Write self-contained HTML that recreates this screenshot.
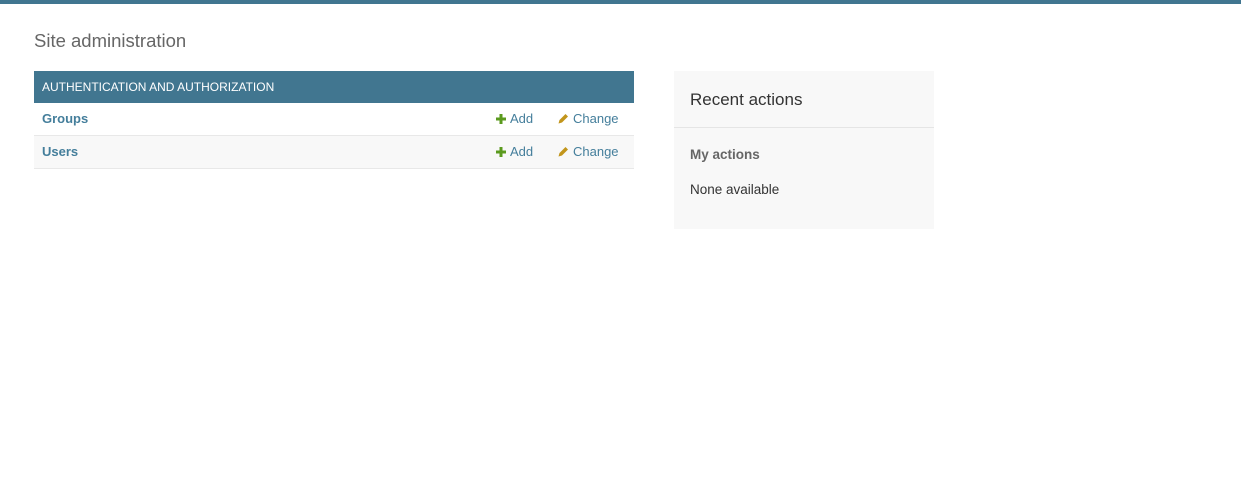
<!DOCTYPE html>
<html><head><meta charset="utf-8"><style>
*{box-sizing:border-box;margin:0;padding:0}
body{width:1241px;height:479px;background:#fff;font-family:"Liberation Sans","DejaVu Sans",sans-serif;font-size:13px;color:#333;position:relative;overflow:hidden}
.top{position:absolute;left:0;top:0;width:1241px;height:4px;background:#417690}
h1{position:absolute;left:34px;top:30px;font-weight:300;font-size:18.5px;color:#666}
.mod{position:absolute;left:34px;top:71px;width:600px}
.cap{background:#417690;color:#fff;height:32px;line-height:32px;padding-left:8px;font-size:12px}
.row{height:33px;border-bottom:1px solid #e8e8e8;position:relative;line-height:32px}
.row.alt{background:#f8f8f8}
.row b{position:absolute;left:8px;color:#447e9b;font-size:13px}
.add{position:absolute;left:462px;color:#447e9b}
.chg{position:absolute;left:524px;color:#447e9b}
.add svg,.chg svg{vertical-align:-1px;margin-right:4px}
.rec{position:absolute;left:674px;top:71px;width:260px;height:158px;background:#f8f8f8}
.rec h2{font-weight:400;font-size:17px;color:#333;padding:19px 16px 0;height:57px;border-bottom:1px solid #e5e5e5}
.rec h3{font-size:13.5px;color:#666;position:absolute;left:16px;top:76px}
.rec p{position:absolute;left:16px;top:111px;font-size:13.5px}
</style></head><body>
<div class="top"></div>
<h1>Site administration</h1>
<div class="mod">
<div class="cap">AUTHENTICATION AND AUTHORIZATION</div>
<div class="row"><b>Groups</b><span class="add"><svg width="10" height="10"><path d="M3.5 0h3v3.5h3.5v3h-3.5v3.5h-3v-3.5h-3.5v-3h3.5z" fill="#5b9a1e"/></svg>Add</span><span class="chg"><svg width="11" height="11"><path d="M0.5 10.5l1-3.5 6-6 2.5 2.5-6 6z" fill="#c2951b"/></svg>Change</span></div>
<div class="row alt"><b>Users</b><span class="add"><svg width="10" height="10"><path d="M3.5 0h3v3.5h3.5v3h-3.5v3.5h-3v-3.5h-3.5v-3h3.5z" fill="#5b9a1e"/></svg>Add</span><span class="chg"><svg width="11" height="11"><path d="M0.5 10.5l1-3.5 6-6 2.5 2.5-6 6z" fill="#c2951b"/></svg>Change</span></div>
</div>
<div class="rec"><h2>Recent actions</h2><h3>My actions</h3><p>None available</p></div>
</body></html>
